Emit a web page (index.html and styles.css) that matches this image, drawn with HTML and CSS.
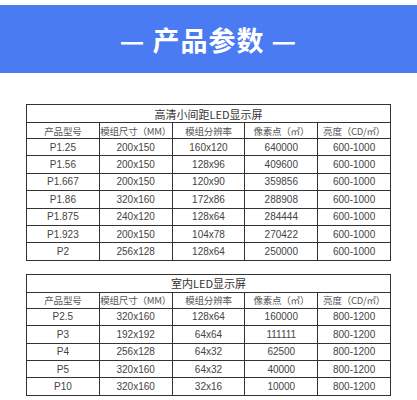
FILE: index.html
```html
<!DOCTYPE html>
<html>
<head>
<meta charset="utf-8">
<link rel="stylesheet" href="styles.css">
</head>
<body>
<div class="banner"><span class="title">— 产品参数 —</span></div>
<table class="spec t1">
  <tr class="cap"><td colspan="5">高清小间距LED显示屏</td></tr>
  <tr class="head"><td>产品型号</td><td>模组尺寸（MM）</td><td>模组分辨率</td><td>像素点（㎡）</td><td>亮度（CD/㎡）</td></tr>
  <tr><td>P1.25</td><td>200x150</td><td>160x120</td><td>640000</td><td>600-1000</td></tr>
  <tr><td>P1.56</td><td>200x150</td><td>128x96</td><td>409600</td><td>600-1000</td></tr>
  <tr><td>P1.667</td><td>200x150</td><td>120x90</td><td>359856</td><td>600-1000</td></tr>
  <tr><td>P1.86</td><td>320x160</td><td>172x86</td><td>288908</td><td>600-1000</td></tr>
  <tr><td>P1.875</td><td>240x120</td><td>128x64</td><td>284444</td><td>600-1000</td></tr>
  <tr><td>P1.923</td><td>200x150</td><td>104x78</td><td>270422</td><td>600-1000</td></tr>
  <tr><td>P2</td><td>256x128</td><td>128x64</td><td>250000</td><td>600-1000</td></tr>
</table>
<table class="spec t2">
  <tr class="cap"><td colspan="5">室内LED显示屏</td></tr>
  <tr class="head"><td>产品型号</td><td>模组尺寸（MM）</td><td>模组分辨率</td><td>像素点（㎡）</td><td>亮度（CD/㎡）</td></tr>
  <tr><td>P2.5</td><td>320x160</td><td>128x64</td><td>160000</td><td>800-1200</td></tr>
  <tr><td>P3</td><td>192x192</td><td>64x64</td><td>111111</td><td>800-1200</td></tr>
  <tr><td>P4</td><td>256x128</td><td>64x32</td><td>62500</td><td>800-1200</td></tr>
  <tr><td>P5</td><td>320x160</td><td>64x32</td><td>40000</td><td>800-1200</td></tr>
  <tr><td>P10</td><td>320x160</td><td>32x16</td><td>10000</td><td>800-1200</td></tr>
</table>
</body>
</html>
```
FILE: styles.css
```css
html, body {
  margin: 0;
  padding: 0;
  background: #fff;
}
body {
  font-family: "Liberation Sans", "Noto Sans CJK SC", sans-serif;
  color: #444;
}
.banner {
  margin-top: 5px;
  height: 68px;
  background: #4a7bf2;
  display: flex;
  align-items: center;
  justify-content: center;
}
.title {
  color: #fff;
  font-family: "Noto Sans CJK SC", sans-serif;
  font-weight: 700;
  font-size: 27px;
  letter-spacing: 1px;
}
.spec {
  border-collapse: collapse;
  margin-left: 26px;
  width: 365px;
  table-layout: fixed;
  font-size: 10px;
  border: 1.5px solid #333;
}
.t1 { margin-top: 31px; }
.t2 { margin-top: 13px; }
.spec td {
  border: 1px solid #333;
  text-align: center;
  padding: 0;
  height: 16.4px;
  white-space: nowrap;
  overflow: hidden;
}
.spec .cap td {
  height: 17px;
  font-size: 11px;
  font-family: "Noto Sans CJK SC", sans-serif;
  color: #333;
}
.spec .head td {
  height: 15px;
  font-size: 9.5px;
  letter-spacing: -0.2px;
  font-family: "Noto Sans CJK SC", sans-serif;
  color: #555;
}
```
